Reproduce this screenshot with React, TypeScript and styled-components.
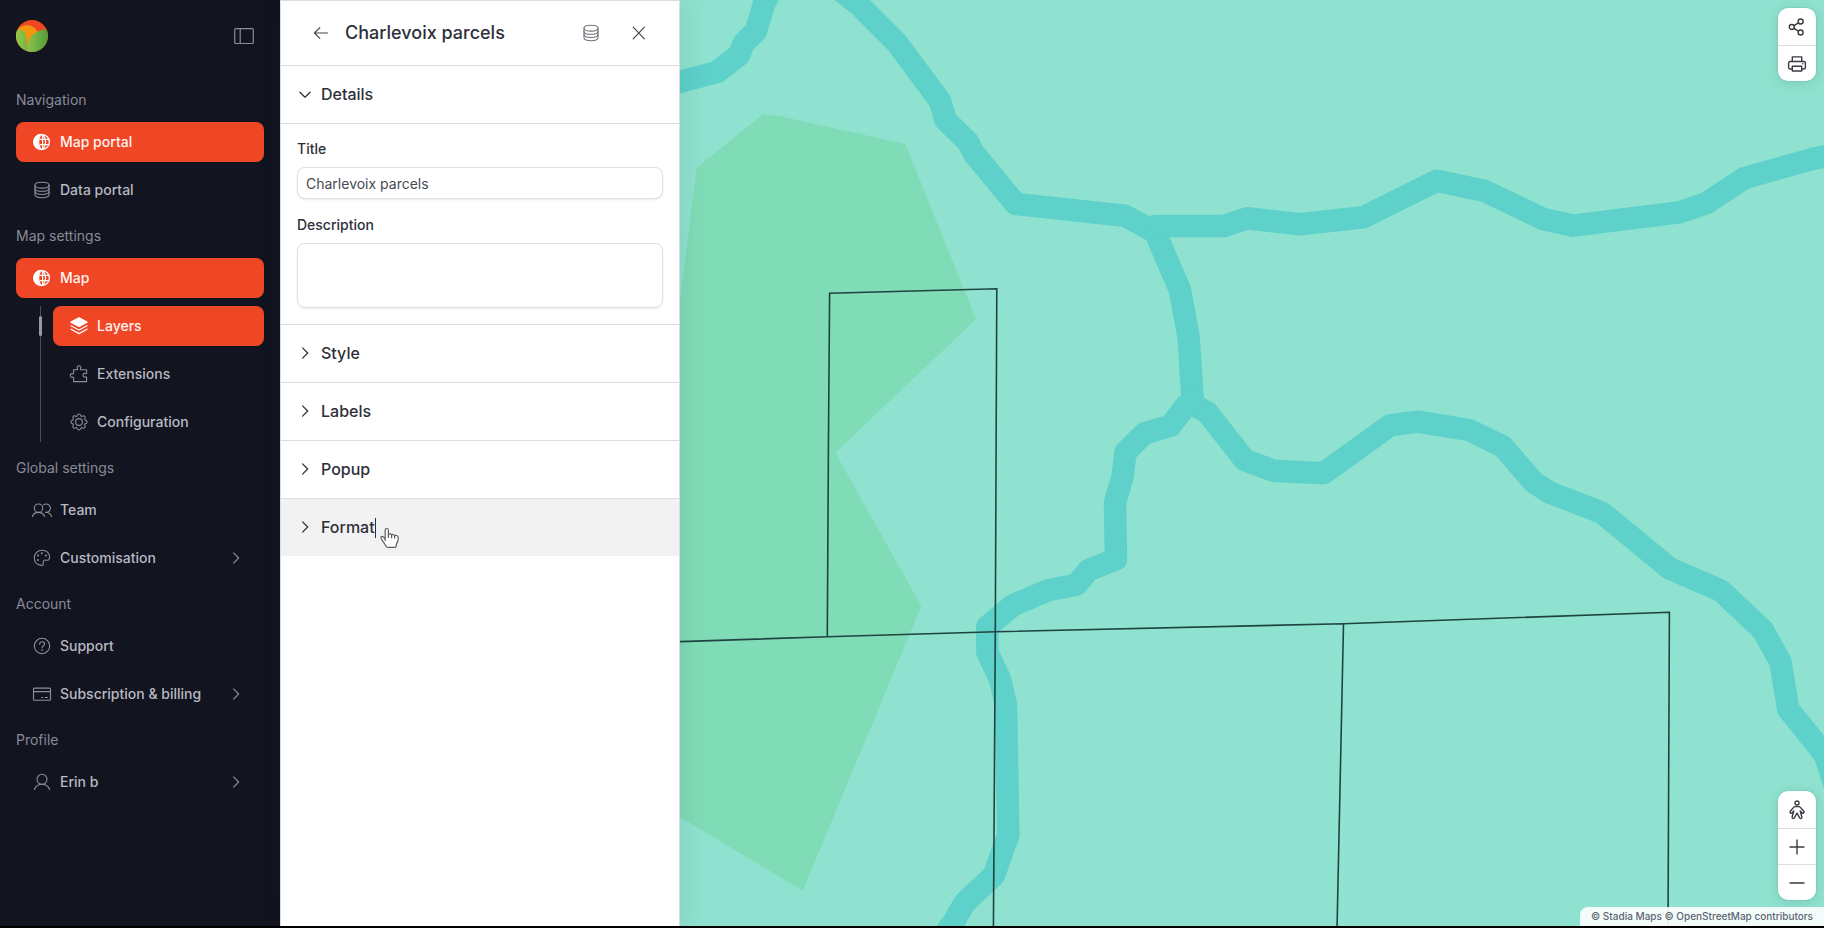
import React from "react";
import styled, { createGlobalStyle, css } from "styled-components";

const GlobalStyle = createGlobalStyle`
  *, *::before, *::after { box-sizing: border-box; }
  body { margin: 0; font-family: Inter, "Liberation Sans", sans-serif; font-size: 14px; line-height: 20px; color: #2e3039; }
  button, input, textarea { font: inherit; color: inherit; }
  button { cursor: pointer; }
`;

/* ---------- Icons ---------- */

const Svg = styled.svg<{ $size?: number; $weight?: number }>`
  display: block;
  flex: none;
  width: ${(p) => p.$size ?? 20}px;
  height: ${(p) => p.$size ?? 20}px;
  fill: none;
  stroke: currentColor;
  stroke-width: ${(p) => p.$weight ?? 1.1};
  stroke-linecap: round;
  stroke-linejoin: round;
`;

type IconProps = { size?: number; weight?: number };

const Icon = ({ size, weight, children }: IconProps & { children: React.ReactNode }) => (
  <Svg viewBox="0 0 20 20" $size={size} $weight={weight} aria-hidden="true">
    {children}
  </Svg>
);

const GlobeIcon = () => (
  <Icon weight={1.2}>
    <circle cx="10" cy="10" r="7.4" />
    <path d="M9.2 2.4A7.6 7.6 0 0 0 9.2 17.6C7.4 15.6 6.6 13 6.6 10s.8-5.6 2.6-7.6Z" fill="currentColor" />
    <path d="M10.6 2.6v14.8M10.8 2.7c1.8 2 2.8 4.6 2.8 7.3s-1 5.3-2.8 7.3M8 7.300h8.800M8 12.700h8.800" />
  </Icon>
);

const DatabaseIcon = () => (
  <Icon>
    <ellipse cx="10" cy="5.200" rx="7" ry="2.900" />
    <path d="M3 5.200v9.600c0 1.600 3.100 2.900 7 2.900s7-1.300 7-2.900V5.200" />
    <path d="M3 8.400c0 1.600 3.100 2.900 7 2.900s7-1.300 7-2.900M3 11.600c0 1.600 3.100 2.900 7 2.900s7-1.300 7-2.900" />
  </Icon>
);

const LayersIcon = () => (
  <Icon weight={1.3}>
    <path d="m10 1.800 8 4.300-8 4.300-8-4.300Z" fill="currentColor" />
    <path d="m2 9.700 8 4.300 8-4.300M2 13.300l8 4.300 8-4.300" />
  </Icon>
);

const PuzzleIcon = () => (
  <Icon>
    <path d="M4.600 17.600v-4.100c-.2-.6-.7-.5-1.200-.3-1.200.4-2.100-.4-2.100-1.700s.9-2.200 2.100-1.700c.5.200 1 .2 1.200-.3V5.800h3.600c.6-.2.500-.7.200-1.200-.6-1.300.2-2.800 1.600-2.800s2.200 1.500 1.600 2.800c-.3.500-.3 1 .2 1.200h5.800v3.500c-.2.600-.7.500-1.100.2-1.300-.7-2.500.3-2.500 1.700s1.200 2.400 2.500 1.700c.4-.3.900-.3 1.100.2v4.500Z" />
  </Icon>
);

const GearIcon = () => (
  <Icon>
    <circle cx="10" cy="10" r="3.400" />
    <path d="M8.200 3.600c.6-2.200 3-2.200 3.600 0 .2.700.9 1 1.500.6 2-1.100 3.600.5 2.500 2.500-.4.600-.1 1.300.6 1.500 2.200.6 2.200 3 0 3.600-.7.200-1 .9-.6 1.500 1.100 2-.5 3.600-2.500 2.500-.6-.4-1.300-.1-1.500.6-.6 2.200-3 2.200-3.600 0-.2-.7-.9-1-1.500-.6-2 1.100-3.600-.5-2.500-2.500.4-.6.100-1.300-.6-1.500-2.200-.6-2.200-3 0-3.600.7-.2 1-.9.6-1.500-1.100-2 .5-3.600 2.500-2.500.6.400 1.300.1 1.500-.6Z" />
  </Icon>
);

const TeamIcon = () => (
  <Icon>
    <circle cx="6.500" cy="8.200" r="4.200" />
    <path d="M.4 16.500c1-2.500 3.300-4.100 6.100-4.100s5.100 1.600 6.100 4.100" />
    <path d="M11.600 4.900a4.200 4.200 0 1 1 1.700 7.400c2.800-.1 5.300 1.500 6.300 4.200" />
  </Icon>
);

const PaletteIcon = () => (
  <Icon>
    <path d="M10.100 2.200c4.300 0 7.500 2.900 7.500 6.700 0 2.400-1.300 3.600-3 3.300-2.300-.5-3.900.6-3.400 3 .3 1.600-.6 2.500-2 2.200C5 16.800 2.300 13.800 2.300 10c0-4.500 3.500-7.800 7.800-7.800Z" />
    <g fill="currentColor" stroke="none">
      <circle cx="9.800" cy="5.300" r="1" /><circle cx="6.100" cy="7.600" r="1" />
      <circle cx="5.900" cy="12" r="1" /><circle cx="13.900" cy="7.500" r="1" />
    </g>
  </Icon>
);

const HelpIcon = () => (
  <Icon>
    <circle cx="10" cy="10" r="7.700" />
    <path d="M7.600 8.100c0-1.400 1-2.400 2.500-2.400s2.500 1 2.500 2.200c0 1.800-2.500 1.900-2.500 3.800" />
    <circle cx="10.100" cy="14.100" r=".9" fill="currentColor" stroke="none" />
  </Icon>
);

const CardIcon = () => (
  <Icon>
    <rect x="1.500" y="4.100" width="17" height="12.200" rx="1" />
    <path d="M1.500 7.600h17M9.600 13.500h1M13 13.500h2.500" />
  </Icon>
);

const UserIcon = () => (
  <Icon>
    <circle cx="10" cy="7.300" r="5" />
    <path d="M2.300 17.500c1.300-3.100 4.200-5.200 7.700-5.200s6.400 2.100 7.700 5.200" />
  </Icon>
);

const SidebarIcon = () => (
  <Icon weight={1.200}>
    <rect x=".7" y="2.700" width="18.600" height="14.800" rx="1" />
    <path d="M6.200 2.700v14.800" />
  </Icon>
);

const ChevronRight = ({ weight = 1.1 }: IconProps) => (
  <Icon weight={weight}><path d="m7.600 4.900 5.100 5.100-5.100 5.100" /></Icon>
);
const ChevronDown = () => (
  <Icon weight={1.200}><path d="m4.900 8.200 5.100 5 5.100-5" /></Icon>
);
const ArrowLeftIcon = () => (
  <Icon weight={1.200}><path d="M16.600 10H3.500M8.800 4.700 3.500 10l5.300 5.300" /></Icon>
);
const CloseIcon = () => (
  <Icon weight={1.200}><path d="m4.200 4.200 11.200 11.600M15.400 4.200 4.200 15.800" /></Icon>
);
const ShareIcon = () => (
  <Icon weight={1.400}>
    <circle cx="4.800" cy="10" r="2.500" /><circle cx="13.600" cy="4.500" r="2.500" /><circle cx="13.600" cy="15.500" r="2.500" />
    <path d="m7.100 8.600 4.300-2.700M7.100 11.400l4.300 2.700" />
  </Icon>
);
const PrintIcon = () => (
  <Icon weight={1.400}>
    <path d="M5.300 7.500V2.900h9.400v4.600M5.300 15H3.100a1.500 1.500 0 0 1-1.500-1.500V9A1.500 1.500 0 0 1 3.100 7.500h13.800A1.500 1.500 0 0 1 18.400 9v4.500a1.500 1.500 0 0 1-1.500 1.500h-2.200M5.300 12.200h9.400v4.800H5.300Z" />
    <circle cx="15.700" cy="9.800" r=".8" fill="currentColor" stroke="none" />
  </Icon>
);
const PersonIcon = () => (
  <Icon weight={1.400}>
    <circle cx="10" cy="3" r="2" />
    <path d="M8.300 6.600h3.400c.8 0 1.300.3 1.700.8l3.300 3.800c1 1.300-.7 2.700-1.800 1.600L13.200 11l1.700 6c.3 1.500-1.700 2.100-2.300.8L10 13l-2.600 4.800c-.6 1.300-2.600.7-2.300-.8l1.700-6-1.700 1.800c-1.100 1.100-2.800-.3-1.800-1.600l3.300-3.800c.4-.5.900-.8 1.700-.8Z" />
  </Icon>
);
const PlusIcon = () => (
  <Icon weight={1.400}><path d="M10 3v14M3 10h14" /></Icon>
);
const MinusIcon = () => (
  <Icon weight={1.400}><path d="M3 10h14" /></Icon>
);

const Logo = () => (
  <Svg viewBox="0 0 32 32" $size={32} $weight={0} role="img" aria-label="Home">
    <defs>
      <clipPath id="disc"><circle cx="16" cy="16" r="16" /></clipPath>
      <linearGradient id="leafLeft" x1="0" x2="1"><stop offset="0" stopColor="#93c94a" /><stop offset="1" stopColor="#76b540" /></linearGradient>
      <linearGradient id="leafRight" x1="0" x2="1"><stop offset="0" stopColor="#86c54c" /><stop offset="1" stopColor="#579a38" /></linearGradient>
    </defs>
    <g clipPath="url(#disc)">
      <rect width="32" height="32" fill="#ee4823" />
      <path d="M0 12C3 7 7 5 11.500 5.200c4.500.3 8 2.600 10 6.300L14 22l-3 5L0 18Z" fill="#f3950f" />
      <path d="M0 10.500c5-3 10.500 1.500 10.500 9 0 3 .2 5 .8 7V32H0Z" fill="url(#leafLeft)" />
      <path d="M32 9.500C22.500 9 13 14.500 11.300 26.500V32H32Z" fill="url(#leafRight)" />
    </g>
  </Svg>
);

/* ---------- Sidebar ---------- */

const Shell = styled.div`
  display: flex;
  min-height: 100vh;
  border-bottom: 2px solid #000;
`;

const Sidebar = styled.aside`
  flex: 0 0 280px;
  padding: 20px 16px;
  background: #12141f;
  color: #b8b9c2;
`;

const SidebarHeader = styled.header`
  display: flex;
  align-items: center;
  justify-content: space-between;
  padding-right: 10px;
  margin-bottom: 38px;
`;

const LogoLink = styled.a`
  display: block;
`;

const PlainButton = styled.button`
  padding: 0;
  border: 0;
  background: none;
  color: #8a8c99;
`;

const NavSection = styled.section`
  margin-bottom: 16px;
`;

const SectionLabel = styled.h2`
  margin: 0 0 12px;
  font-size: 14px;
  line-height: 20px;
  font-weight: 400;
  color: #888b99;
`;

const NavList = styled.div`
  display: flex;
  flex-direction: column;
  gap: 8px;
`;

const SubList = styled(NavList)`
  position: relative;
  margin-left: 24px;
  padding-left: 12px;
  border-left: 1px solid #4a4c5a;
`;

const ScrollMark = styled.span`
  position: absolute;
  top: 10px;
  left: -2px;
  width: 3px;
  height: 20px;
  border-radius: 2px;
  background: #9799aa;
`;

const NavItem = styled.a<{ $active?: boolean }>`
  display: flex;
  align-items: center;
  gap: 8px;
  height: 40px;
  padding: 0 18px 0 16px;
  border-radius: 8px;
  font-weight: 500;
  color: ${(p) => (p.$active ? "#fff3ee" : "#b8b9c2")};
  text-decoration: none;
  ${(p) => p.$active && css`background: #ef4625;`}
`;

const NavIcon = styled.span<{ $active?: boolean }>`
  color: ${(p) => (p.$active ? "#fff" : "#8d8f9b")};
`;

const NavText = styled.span`
  flex: 1;
  white-space: nowrap;
`;

type Item = { text: string; icon: React.ReactNode; active?: boolean; more?: boolean };

const Nav = ({ text, icon, active, more }: Item) => (
  <NavItem href="#" $active={active}>
    <NavIcon $active={active}>{icon}</NavIcon>
    <NavText>{text}</NavText>
    {more && <NavIcon><ChevronRight /></NavIcon>}
  </NavItem>
);

/* ---------- Layer panel ---------- */

const Panel = styled.main`
  position: relative;
  z-index: 1;
  flex: 0 0 400px;
  border: 1px solid #dcdde2;
  border-width: 1px 1px 0;
  background: #fff;
  box-shadow: 4px 0 24px rgba(30, 60, 60, 0.1);
`;

const PanelHeader = styled.header`
  display: flex;
  align-items: center;
  gap: 14px;
  height: 65px;
  padding: 0 30px;
  border-bottom: 1px solid #dcdde2;
`;

const PanelTitle = styled.h1`
  flex: 1;
  margin: 0;
  font-size: 18px;
  line-height: 24px;
  font-weight: 500;
`;

const HeaderActions = styled.div`
  display: flex;
  gap: 28px;
`;

const IconButton = styled(PlainButton)<{ $muted?: boolean }>`
  color: ${(p) => (p.$muted ? "#6f717c" : "#454750")};
`;

const AccordionButton = styled.button<{ $hovered?: boolean }>`
  display: flex;
  align-items: center;
  gap: 6px;
  width: 100%;
  height: 57px;
  padding: 0 14px 2px;
  border: 0;
  background: ${(p) => (p.$hovered ? "#f2f2f3" : "transparent")};
  font-size: 16px;
  line-height: 24px;
  font-weight: 500;
  text-align: left;
`;

const AccordionItem = styled.section`
  position: relative;
  & + & { border-top: 1px solid #dcdde2; }
`;

const Details = styled.form`
  display: flex;
  flex-direction: column;
  gap: 16px;
  padding: 15px 16px 16px;
  border-top: 1px solid #dcdde2;
`;

const Field = styled.div`
  display: flex;
  flex-direction: column;
  gap: 8px;
`;

const FieldLabel = styled.label`
  font-weight: 500;
`;

const controlStyle = css`
  width: 100%;
  border: 1px solid #dfe0e5;
  border-radius: 8px;
  background: #fff;
  box-shadow: 0 1px 2px rgba(20, 24, 40, 0.08);
  padding: 0 8px;
  color: #484a53;
  outline: 0;
`;

const TextInput = styled.input`
  ${controlStyle}
  height: 32px;
`;

const TextArea = styled.textarea`
  ${controlStyle}
  display: block;
  height: 65px;
  resize: none;
`;

const Caret = styled.span`
  display: inline-block;
  width: 1px;
  height: 20px;
  vertical-align: middle;
  background: #2e3039;
`;

const Pointer = styled.svg`
  position: absolute;
  top: 28px;
  left: 98px;
  width: 22px;
  height: 24px;
  pointer-events: none;
`;

const HandPointer = () => (
  <Pointer viewBox="0 0 22 24" aria-hidden="true">
    <path
      d="M6.200 13.600V3.200c0-2.300 3.200-2.300 3.200 0v4.600c.5-1.500 2.900-1.300 3.200.4.700-1.200 2.800-.9 3 .7.900-.9 3.100-.5 3.600 1.200.3 1 0 2.800-.6 4.500-.7 1.700-1.400 2.800-1.500 4.300 0 1-.3 1.500-1.200 1.500H8.800c-1 0-1.400-.5-1.900-1.500-.8-1.600-2-3.300-3.700-5.600-.9-1.200-1.800-2.400-1.300-3.300.6-1.100 2.500-.5 4.300 1.900Z"
      fill="#fff" stroke="#5a5b60" strokeWidth="1.200" strokeLinejoin="round"
    />
    <path d="M9.400 7.600v2.800M12.600 8.300v2.500M15.600 9.200v2" stroke="#5a5b60" strokeWidth="1.200" strokeLinecap="round" />
  </Pointer>
);

/* ---------- Map ---------- */

const MapArea = styled.section`
  position: relative;
  flex: 1;
  min-width: 0;
  overflow: hidden;
  background: #8fe2cf;
`;

const MapCanvas = styled.svg`
  position: absolute;
  inset: 0;
  width: 100%;
  height: 100%;
`;

const ControlGroup = styled.div<{ $place: "top" | "bottom" }>`
  position: absolute;
  right: 8px;
  ${(p) => (p.$place === "top" ? "top: 8px;" : "bottom: 26px;")}
  width: 38px;
  border-radius: 10px;
  background: #fff;
  box-shadow: 0 0 0 1px rgba(20, 60, 60, 0.06), 0 2px 12px rgba(20, 60, 60, 0.14);
`;

const ControlButton = styled.button`
  display: flex;
  align-items: center;
  justify-content: center;
  width: 100%;
  height: 37px;
  padding: 0;
  border: 0;
  background: none;
  color: #3a3b42;
  & + & { height: 36px; border-top: 1px solid #dcdde2; }
`;

const Attribution = styled.footer`
  position: absolute;
  right: 0;
  bottom: 0;
  padding: 0 11px;
  border-radius: 8px 0 0 0;
  background: rgba(255, 255, 255, 0.9);
  font-size: 10px;
  line-height: 19px;
  font-weight: 500;
  white-space: nowrap;
  color: #5c6572;
`;

const AttributionLink = styled.a`
  color: inherit;
  text-decoration: none;
`;

const rivers = [
  "M770-8 764 4 756 31 744 43 739 55 717 72 676 83 650 92",
  "M835-14 859 5 897 43 940 101 945.500 120 968 142 973.500 153 1015.600 204 1124.600 215.700 1155 232 1180 290 1188.500 337 1193 405",
  "M1156 226H1224L1247 218.300 1299.500 224.300 1363.500 217.300 1436.800 180.700 1484 190.700 1544 219.300 1573 225.700 1679 212.300 1706 203.300 1744 178.300 1813 158.700 1840 153",
  "M1193 405 1207 412 1244.600 460 1273.600 470.700 1323.400 473.300 1390 425.300 1418 421.700 1469 430 1503 446.700 1533.500 482 1550 492.700 1602 512.700 1670 568.700 1720.400 590.300 1763 630.300 1780.400 662 1788.300 709.300 1825 755 1838 795",
  "M1193 400 1184 408 1170.600 425.700 1144.600 433.300 1125.400 452.300 1122.700 476 1115 502.700 1116 559.300 1088.700 570 1076.400 584.700 1048 590.300 1013.300 605 987.300 626.700V652.300L1000 679.300 1006 705 1008.300 835 994 875.300 965.400 902 961 909 955 920 940 940",
];

const ParcelMap = () => (
  <MapCanvas viewBox="680 0 1144 926" preserveAspectRatio="xMinYMin slice" role="img" aria-label="Charlevoix parcels map">
    <path
      d="M763 114.300 779 116 905.400 144 976 319.300 835.300 452.700 921.400 606 802.800 890.700 679 816.500 640 790V500L679 307 696.800 168 702.500 163Z"
      fill="#80dcb7"
    />
    <g fill="none" stroke="#5dd1ca" strokeWidth="22.500" strokeLinejoin="round" strokeLinecap="round">
      {rivers.map((d) => <path key={d} d={d} />)}
    </g>
    <g fill="none" stroke="#1f4341" strokeWidth="1.600">
      <path d="M827.300 636.700 828.400 450 829.600 293.300 996.800 288.700 995.300 631.700 993.400 930" />
      <path d="M670 642 827.300 636.700 995.300 631.700 1343.500 623.700 1669.400 612.300 1668 930M1343.500 623.700 1337 930" />
    </g>
  </MapCanvas>
);

export default function App() {
  return (
    <>
      <GlobalStyle />
      <Shell>
        <Sidebar>
          <SidebarHeader>
            <LogoLink href="#" aria-label="Home"><Logo /></LogoLink>
            <PlainButton aria-label="Toggle sidebar"><SidebarIcon /></PlainButton>
          </SidebarHeader>
          <nav>
            <NavSection>
              <SectionLabel>Navigation</SectionLabel>
              <NavList>
                <Nav text="Map portal" icon={<GlobeIcon />} active />
                <Nav text="Data portal" icon={<DatabaseIcon />} />
              </NavList>
            </NavSection>
            <NavSection>
              <SectionLabel>Map settings</SectionLabel>
              <NavList>
                <Nav text="Map" icon={<GlobeIcon />} active />
                <SubList>
                  <ScrollMark />
                  <Nav text="Layers" icon={<LayersIcon />} active />
                  <Nav text="Extensions" icon={<PuzzleIcon />} />
                  <Nav text="Configuration" icon={<GearIcon />} />
                </SubList>
              </NavList>
            </NavSection>
            <NavSection>
              <SectionLabel>Global settings</SectionLabel>
              <NavList>
                <Nav text="Team" icon={<TeamIcon />} />
                <Nav text="Customisation" icon={<PaletteIcon />} more />
              </NavList>
            </NavSection>
            <NavSection>
              <SectionLabel>Account</SectionLabel>
              <NavList>
                <Nav text="Support" icon={<HelpIcon />} />
                <Nav text="Subscription &amp; billing" icon={<CardIcon />} more />
              </NavList>
            </NavSection>
            <NavSection>
              <SectionLabel>Profile</SectionLabel>
              <NavList>
                <Nav text="Erin b" icon={<UserIcon />} more />
              </NavList>
            </NavSection>
          </nav>
        </Sidebar>

        <Panel>
          <PanelHeader>
            <IconButton aria-label="Back"><ArrowLeftIcon /></IconButton>
            <PanelTitle>Charlevoix parcels</PanelTitle>
            <HeaderActions>
              <IconButton $muted aria-label="View data"><DatabaseIcon /></IconButton>
              <IconButton aria-label="Close"><CloseIcon /></IconButton>
            </HeaderActions>
          </PanelHeader>
          <AccordionItem>
            <AccordionButton aria-expanded="true"><ChevronDown />Details</AccordionButton>
            <Details>
              <Field>
                <FieldLabel htmlFor="title">Title</FieldLabel>
                <TextInput id="title" defaultValue="Charlevoix parcels" />
              </Field>
              <Field>
                <FieldLabel htmlFor="description">Description</FieldLabel>
                <TextArea id="description" />
              </Field>
            </Details>
          </AccordionItem>
          {["Style", "Labels", "Popup"].map((name) => (
            <AccordionItem key={name}>
              <AccordionButton aria-expanded="false"><ChevronRight weight={1.2} />{name}</AccordionButton>
            </AccordionItem>
          ))}
          <AccordionItem>
            <AccordionButton aria-expanded="false" $hovered>
              <ChevronRight weight={1.2} />
              <span>Format<Caret /></span>
            </AccordionButton>
            <HandPointer />
          </AccordionItem>
        </Panel>

        <MapArea>
          <ParcelMap />
          <ControlGroup $place="top">
            <ControlButton aria-label="Share"><ShareIcon /></ControlButton>
            <ControlButton aria-label="Print"><PrintIcon /></ControlButton>
          </ControlGroup>
          <ControlGroup $place="bottom">
            <ControlButton aria-label="Street view"><PersonIcon /></ControlButton>
            <ControlButton aria-label="Zoom in"><PlusIcon /></ControlButton>
            <ControlButton aria-label="Zoom out"><MinusIcon /></ControlButton>
          </ControlGroup>
          <Attribution>
            <AttributionLink href="#">© Stadia Maps</AttributionLink>{" "}
            <AttributionLink href="#">© OpenStreetMap contributors</AttributionLink>
          </Attribution>
        </MapArea>
      </Shell>
    </>
  );
}
